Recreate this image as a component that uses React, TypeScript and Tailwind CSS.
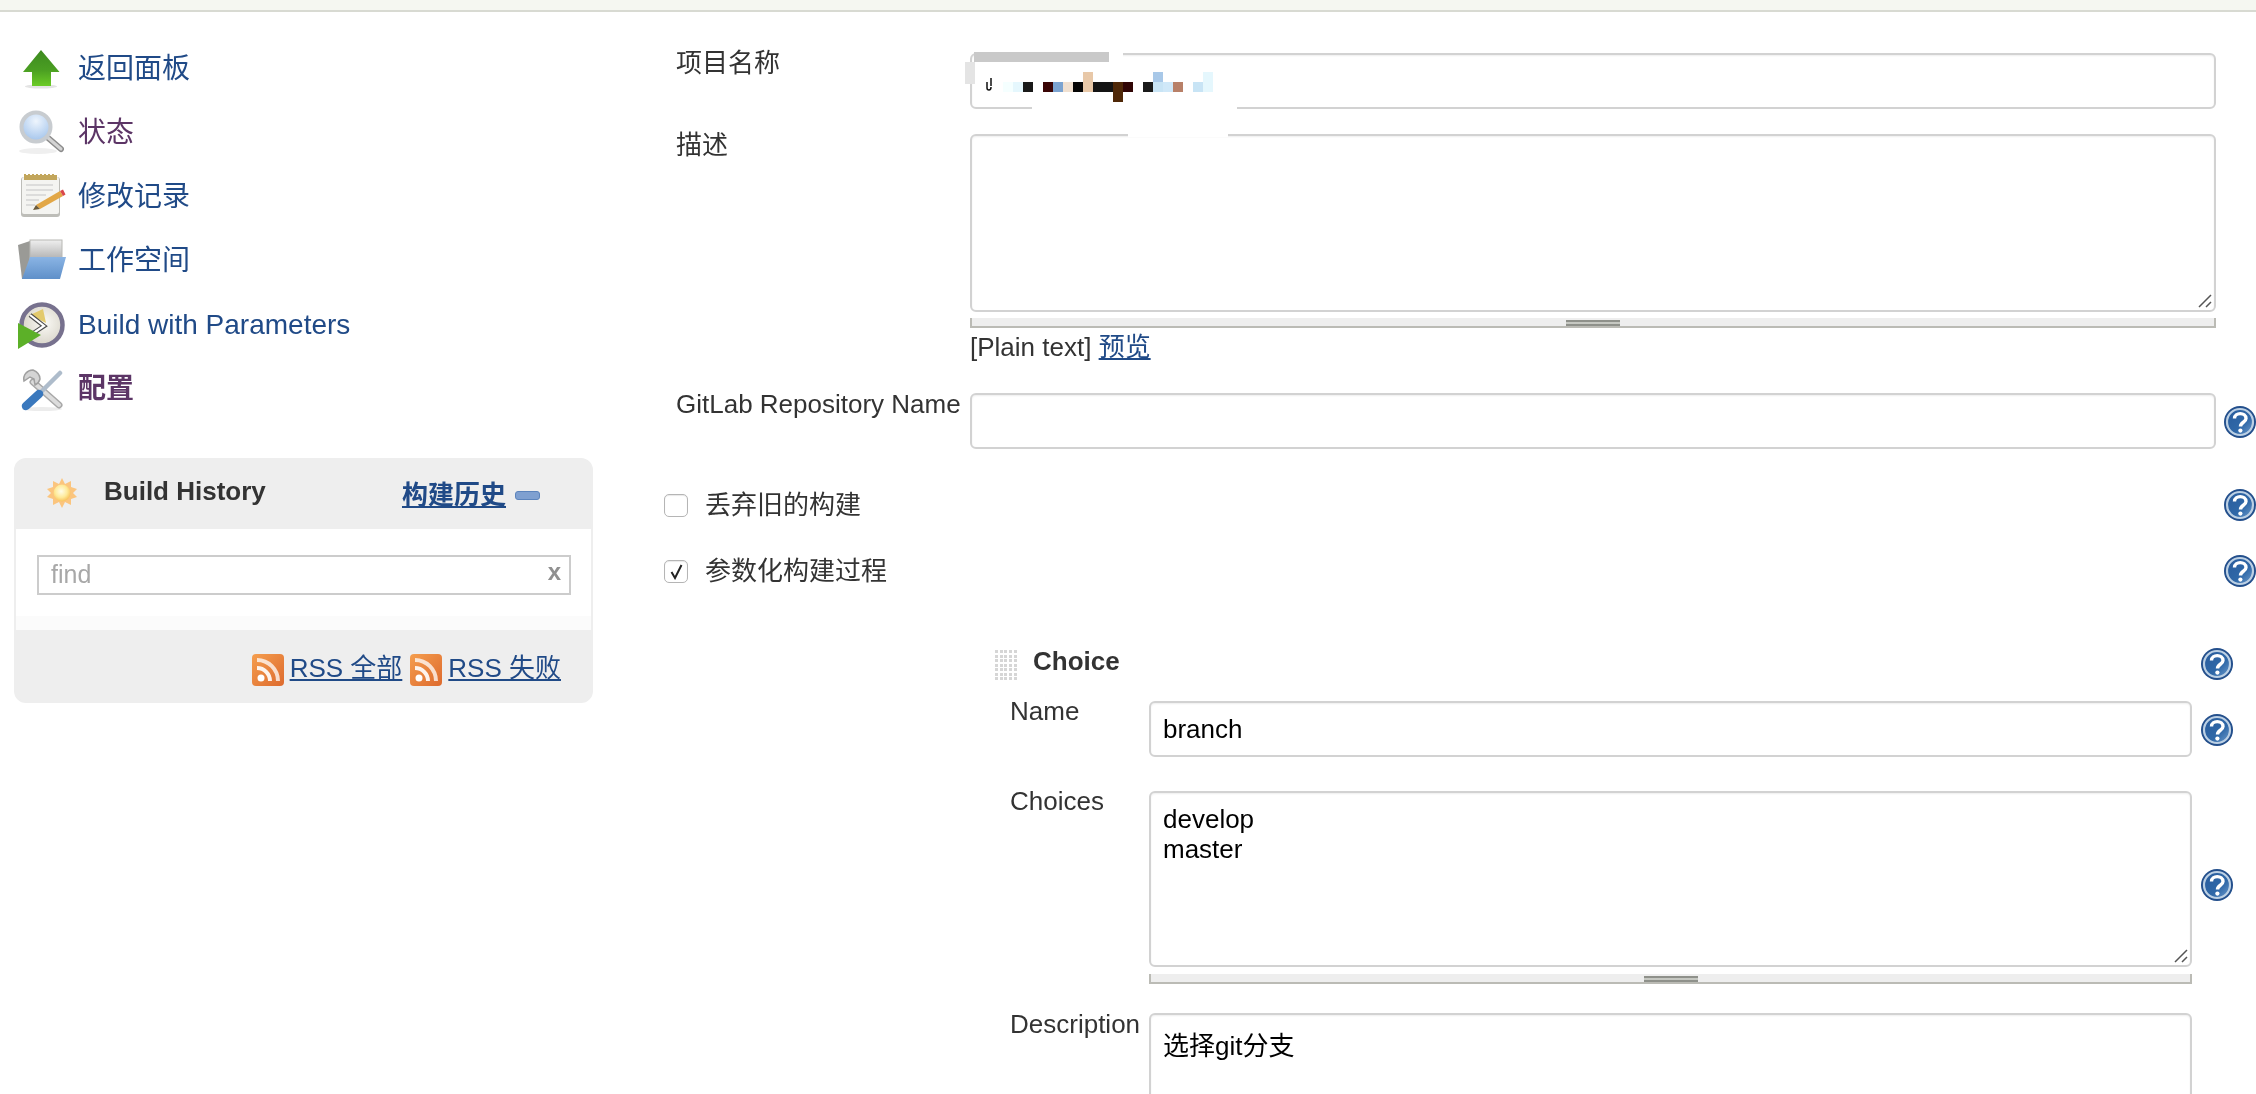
import { useId } from 'react';
import type { ReactNode } from 'react';

const sans = "font-['Liberation_Sans','Noto_Sans_CJK_SC',sans-serif]";

// mosaic that hides the project name: [x, y, w, h, colour]
const blocks: [number, number, number, number, string][] = [
  [1003, 82, 10, 10, '#f5ffff'],
  [1013, 82, 10, 10, '#e5f7fd'],
  [1023, 82, 10, 10, '#1a1a1a'],
  [1043, 82, 10, 10, '#3a0505'],
  [1053, 82, 10, 10, '#7ba3d0'],
  [1063, 82, 10, 10, '#f0e0d0'],
  [1073, 82, 10, 10, '#050505'],
  [1083, 72, 10, 20, '#e8c8a8'],
  [1093, 82, 20, 10, '#141414'],
  [1113, 82, 10, 20, '#4f2808'],
  [1123, 82, 10, 10, '#300505'],
  [1143, 82, 10, 10, '#1a1a1a'],
  [1153, 72, 10, 10, '#a8c8e8'],
  [1153, 82, 10, 10, '#c8e4f5'],
  [1163, 82, 10, 10, '#d0e8f8'],
  [1173, 82, 10, 10, '#b88068'],
  [1193, 82, 10, 10, '#c8e4f5'],
  [1203, 72, 10, 20, '#e5f7fd'],
];

function ArrowIcon() {
  const id = useId();
  return (
    <svg width="48" height="48" viewBox="0 0 48 48">
      <defs>
        <linearGradient id={id} x1="0" y1="0" x2="0" y2="1">
          <stop offset="0" stopColor="#3d8a20" />
          <stop offset="0.55" stopColor="#4a9e22" />
          <stop offset="1" stopColor="#6ccc26" />
        </linearGradient>
      </defs>
      <ellipse cx="23" cy="42.5" rx="16" ry="2" fill="#e4e4e4" />
      <path d="M23 6 L41.5 28 H33 V42 H14 V28 H5 Z" fill={`url(#${id})`} />
    </svg>
  );
}

function SearchIcon() {
  const id = useId();
  return (
    <svg width="48" height="48" viewBox="0 0 48 48">
      <defs>
        <radialGradient id={id} cx="0.5" cy="0.3" r="0.75">
          <stop offset="0" stopColor="#eef5fd" />
          <stop offset="1" stopColor="#9dc0ea" />
        </radialGradient>
      </defs>
      <ellipse cx="20" cy="43" rx="19" ry="3" fill="#efefef" />
      <path d="M29 29 L43 41" stroke="#8c8c8c" strokeWidth="6" strokeLinecap="round" />
      <path d="M29 29 L43 41" stroke="#d4d4d4" strokeWidth="3" strokeLinecap="round" />
      <circle cx="18" cy="19" r="14.5" fill={`url(#${id})`} stroke="#c8ccd0" strokeWidth="4" />
    </svg>
  );
}

function NotepadIcon() {
  return (
    <svg width="48" height="48" viewBox="0 0 48 48">
      <rect x="3" y="5" width="39" height="40" rx="3" fill="#bdbdb8" />
      <rect x="4" y="5" width="37" height="37" rx="2" fill="#f4f4f1" />
      <rect x="6" y="3" width="33" height="5" fill="#c2a65c" />
      <path d="M7 3v-1M11 3v-1M15 3v-1M19 3v-1M23 3v-1M27 3v-1M31 3v-1M35 3v-1" stroke="#c2a65c" strokeWidth="2" />
      <path d="M8 13h27M8 18h27M8 23h20M8 28h13M8 33h9" stroke="#d4d4d4" strokeWidth="1.6" />
      <path d="M18 33 L42 19 L45 24 L22 37 Z" fill="#e2a746" />
      <path d="M42 19 L45 17.5 L47.5 22.5 L45 24 Z" fill="#d9474a" />
      <path d="M18 33 L22 37 L15 38 Z" fill="#6b5a3a" />
    </svg>
  );
}

function FolderIcon() {
  const blue = useId();
  const paper = useId();
  return (
    <svg width="50" height="44" viewBox="0 0 50 44">
      <defs>
        <linearGradient id={blue} x1="0" y1="0" x2="0" y2="1">
          <stop offset="0" stopColor="#8ab4e4" />
          <stop offset="1" stopColor="#5f90c9" />
        </linearGradient>
        <linearGradient id={paper} x1="0" y1="0" x2="0" y2="1">
          <stop offset="0" stopColor="#efefef" />
          <stop offset="1" stopColor="#a8a8a8" />
        </linearGradient>
      </defs>
      <path d="M0 7 L12 3 V30 L6 41 H4 Z" fill="#9a9a96" />
      <rect x="12" y="2" width="32" height="22" fill={`url(#${paper})`} stroke="#b8b8b4" />
      <path d="M12 19 H48 L42 41 H4 Z" fill={`url(#${blue})`} />
    </svg>
  );
}

function ClockPlayIcon() {
  const face = useId();
  return (
    <svg width="48" height="50" viewBox="0 0 48 50">
      <defs>
        <radialGradient id={face} cx="0.55" cy="0.45" r="0.6">
          <stop offset="0" stopColor="#fbfaf6" />
          <stop offset="1" stopColor="#d6d2c6" />
        </radialGradient>
      </defs>
      <circle cx="24" cy="26" r="20.5" fill={`url(#${face})`} stroke="#77718e" strokeWidth="4.5" />
      <path d="M12 16 L25 10 L28 24 Z" fill="#e3ca6c" />
      <path d="M12 16 L26 27 L14 35" fill="none" stroke="#4c4c4c" strokeWidth="4.5" />
      <path d="M12 16 L26 27 L14 35" fill="none" stroke="#fff" strokeWidth="2.2" />
      <path d="M0 24 L23 36 L0 50 Z" fill="#5cb028" />
    </svg>
  );
}

function ToolsIcon() {
  return (
    <svg width="48" height="48" viewBox="0 0 48 48">
      <ellipse cx="24" cy="45" rx="20" ry="2" fill="#ececec" />
      <path d="M15 18 L41 41" stroke="#a8a8a8" strokeWidth="7" strokeLinecap="round" />
      <path d="M15 18 L41 41" stroke="#dcdcdc" strokeWidth="4" strokeLinecap="round" />
      <path d="M15 6 A9 9 0 0 0 6 17 L12 13 L16 15 L17 21 A9 9 0 0 0 22 15 Q22 9 15 6 Z" fill="#d4d4d4" stroke="#a0a0a0" strokeWidth="1.5" />
      <path d="M42 9 L24 27" stroke="#aebccb" strokeWidth="4.5" strokeLinecap="round" />
      <path d="M21 30 L8 42" stroke="#3a78bd" strokeWidth="8.5" strokeLinecap="round" />
    </svg>
  );
}

function SunIcon() {
  const id = useId();
  return (
    <svg width="30" height="30" viewBox="0 0 30 30">
      <defs>
        <radialGradient id={id} cx="0.45" cy="0.4" r="0.6">
          <stop offset="0" stopColor="#fffde8" />
          <stop offset="0.6" stopColor="#feea9a" />
          <stop offset="1" stopColor="#f8c25c" />
        </radialGradient>
      </defs>
      <path
        d="M15 0 L18 6 L24 3 L24 9 L30 11 L26 15 L30 19 L24 21 L24 27 L18 24 L15 30 L12 24 L6 27 L6 21 L0 19 L4 15 L0 11 L6 9 L6 3 L12 6 Z"
        fill="#fbc57e"
      />
      <circle cx="15" cy="15" r="8.5" fill={`url(#${id})`} />
    </svg>
  );
}

function RssIcon() {
  const id = useId();
  return (
    <svg width="32" height="32" viewBox="0 0 32 32">
      <defs>
        <linearGradient id={id} x1="0" y1="0" x2="1" y2="1">
          <stop offset="0" stopColor="#f59e4e" />
          <stop offset="1" stopColor="#dd6a2e" />
        </linearGradient>
      </defs>
      <rect width="32" height="32" rx="4" fill={`url(#${id})`} />
      <circle cx="9" cy="24" r="3.5" fill="#fff" />
      <path d="M5 14 A13 13 0 0 1 18 27" fill="none" stroke="#fff" strokeWidth="4" opacity="0.9" />
      <path d="M5 6 A21 21 0 0 1 26 27" fill="none" stroke="#fff" strokeWidth="4" opacity="0.75" />
    </svg>
  );
}

function HelpIcon() {
  const id = useId();
  return (
    <svg width="32" height="32" viewBox="0 0 32 32" className="shrink-0">
      <defs>
        <linearGradient id={id} x1="0" y1="0" x2="1" y2="1">
          <stop offset="0" stopColor="#2a5c9c" />
          <stop offset="0.6" stopColor="#2f68a8" />
          <stop offset="1" stopColor="#6f9ccc" />
        </linearGradient>
      </defs>
      <circle cx="16" cy="16" r="16" fill="#234f8c" />
      <circle cx="16" cy="16" r="13" fill={`url(#${id})`} stroke="#bcd0e4" strokeWidth="2.2" />
      <path
        d="M10.5 12.5 C10.5 6 22 6 22 12.5 C22 16.5 16.5 16 16.5 20.5"
        fill="none"
        stroke="#fff"
        strokeWidth="3.4"
      />
      <circle cx="16.4" cy="24.6" r="2.1" fill="#fff" />
    </svg>
  );
}

function Grippie() {
  return (
    <div className="h-[10px] border-l-2 border-r-2 border-b-2 border-[#bbbbb5] bg-[#eeeeee] flex justify-center items-end">
      <div className="w-[54px] h-[6px] bg-[#c6c8c2] border-t-2 border-b-2 border-[#8f918b]" />
    </div>
  );
}

function ResizeHandle() {
  return (
    <svg width="16" height="16" viewBox="0 0 16 16" className="absolute right-[1px] bottom-[1px]">
      <path d="M2 14 L14 2 M9 14 L14 9" stroke="#555" strokeWidth="1.5" />
    </svg>
  );
}

const box = 'border-2 border-[#d2d2d2] rounded-[6px] bg-white shadow-[inset_0_1px_2px_#eeeeee]';
const link = 'text-[#204a87]';
const visited = 'text-[#5c3566]';
const label = 'text-[26px] text-[#333333] leading-[20px]';

function NavItem({ icon, text, className }: { icon: ReactNode; text: string; className: string }) {
  return (
    <div className="h-[64px] flex items-center pl-[18px]">
      <div className="w-[60px] flex items-center blur-[0.5px]">{icon}</div>
      <span className={`text-[28px] mt-[1px] ${className}`}>{text}</span>
    </div>
  );
}

function Sidebar() {
  return (
    <div className="w-[664px] shrink-0 pt-[24px]">
      <NavItem icon={<ArrowIcon />} text="返回面板" className={link} />
      <NavItem icon={<SearchIcon />} text="状态" className={visited} />
      <NavItem icon={<NotepadIcon />} text="修改记录" className={link} />
      <NavItem icon={<FolderIcon />} text="工作空间" className={link} />
      <NavItem icon={<ClockPlayIcon />} text="Build with Parameters" className={link} />
      <NavItem icon={<ToolsIcon />} text="配置" className={`${visited} font-bold`} />

      <div className="mt-[38px] ml-[14px] w-[579px] h-[245px] rounded-[12px] border-2 border-[#eeeeee] bg-[#eeeeee] flex flex-col overflow-hidden">
        <div className="h-[69px] shrink-0 flex items-center pl-[31px] pr-[51px]">
          <div className="-mt-[3px]">
            <SunIcon />
          </div>
          <span className="ml-[27px] -mt-[6px] text-[26px] font-bold text-[#333333]">Build History</span>
          <a className={`ml-auto mt-[2px] text-[26px] font-bold underline ${link}`}>构建历史</a>
          <span className="ml-[9px] mt-[2px] w-[25px] h-[9px] rounded-[3px] bg-[#7fa0d0] border border-[#5c84bc]" />
        </div>
        <div className="h-[101px] shrink-0 bg-white border-b-[14px] border-[#fbfbfb] pt-[26px] px-[21px]">
          <div className="h-[40px] w-[534px] border-2 border-[#cccccc] bg-white flex items-center justify-between pl-[12px] pr-[8px]">
            <span className="text-[25px] text-[#a8a8a8]">find</span>
            <span className="text-[24px] font-bold text-[#909090] -mt-[6px]">x</span>
          </div>
        </div>
        <div className="flex-1 flex items-start justify-end pt-[22px] pr-[30px] text-[26px]">
          <div className="flex items-center">
            <RssIcon />
            <a className={`ml-[6px] -mt-[3px] underline ${link}`}>RSS 全部</a>
          </div>
          <div className="flex items-center ml-[8px]">
            <RssIcon />
            <a className={`ml-[6px] -mt-[3px] underline ${link}`}>RSS 失败</a>
          </div>
        </div>
      </div>
    </div>
  );
}

function ProjectFields() {
  return (
    <>
      <div className="flex pl-[12px]">
        <div className={`w-[294px] shrink-0 ${label}`}>项目名称</div>
        <div className={`${box} w-[1246px] h-[56px]`} />
      </div>
      <div className="flex pl-[12px] mt-[25px]">
        <div className={`w-[294px] shrink-0 mt-[1px] ${label}`}>描述</div>
        <div className="w-[1246px]">
          <div className={`${box} h-[178px] relative`}>
            <ResizeHandle />
          </div>
          <div className="mt-[6px]">
            <Grippie />
          </div>
          <div className="mt-[1px] text-[26px] text-[#333333] leading-[36px]">
            [Plain text] <a className={`underline ${link}`}>预览</a>
          </div>
        </div>
      </div>
      <div className="flex pl-[12px] mt-[28px]">
        <div className={`w-[294px] shrink-0 mt-[1px] whitespace-nowrap ${label}`}>GitLab Repository Name</div>
        <div className={`${box} w-[1246px] h-[56px]`} />
        <div className="ml-[8px] mt-[13px]">
          <HelpIcon />
        </div>
      </div>
    </>
  );
}

function CheckRow({ text, checked, className }: { text: string; checked?: boolean; className: string }) {
  return (
    <div className={`flex items-center h-[32px] ${className}`}>
      <div className="w-[24px] h-[23px] rounded-[5px] border border-[#b5b5b5] bg-white flex items-center justify-center shadow-[inset_0_1px_1px_#e8e8e8]">
        {checked && (
          <svg width="15" height="17" viewBox="0 0 15 17">
            <path d="M2.5 9 L6 15 L12.5 2" fill="none" stroke="#222" strokeWidth="2" />
          </svg>
        )}
      </div>
      <span className="ml-[17px] text-[26px] text-[#333333]">{text}</span>
      <div className="ml-auto">
        <HelpIcon />
      </div>
    </div>
  );
}

function ChoiceBlock() {
  return (
    <div className="ml-[331px] mt-[61px]">
      <div className="flex items-center h-[32px] pr-[23px]">
        <div className="w-[22px] h-[28px] grid grid-cols-5 gap-[1.5px]">
          {Array.from({ length: 35 }).map((_, i) => (
            <span key={i} className="w-[3px] h-[3px] bg-[#d6d6d6]" />
          ))}
        </div>
        <span className="ml-[16px] -mt-[6px] text-[26px] font-bold text-[#333333]">Choice</span>
        <div className="ml-auto">
          <HelpIcon />
        </div>
      </div>
      <div className="flex mt-[21px] pl-[15px]">
        <div className={`w-[139px] shrink-0 ${label}`}>Name</div>
        <div className={`${box} w-[1043px] h-[56px] flex items-center pl-[12px] text-[26px] text-black`}>branch</div>
        <div className="ml-[9px] mt-[13px]">
          <HelpIcon />
        </div>
      </div>
      <div className="flex mt-[34px] pl-[15px]">
        <div className={`w-[139px] shrink-0 ${label}`}>Choices</div>
        <div className="w-[1043px]">
          <div className={`${box} h-[176px] relative pl-[12px] pt-[11px] text-[26px] leading-[30px] text-black`}>
            develop
            <br />
            master
            <ResizeHandle />
          </div>
          <div className="mt-[7px]">
            <Grippie />
          </div>
        </div>
        <div className="ml-[9px] mt-[78px]">
          <HelpIcon />
        </div>
      </div>
      <div className="flex mt-[29px] pl-[15px]">
        <div className={`w-[139px] shrink-0 mt-[1px] ${label}`}>Description</div>
        <div className={`${box} w-[1043px] h-[178px] pl-[12px] pt-[16px] text-[26px] leading-[30px] text-black`}>选择git分支</div>
      </div>
    </div>
  );
}

export default function App() {
  return (
    <div className={`w-[2256px] h-[1094px] overflow-hidden bg-white relative blur-[0.35px] ${sans}`}>
      <div className="h-[12px] bg-[#f5f7f1] border-b-2 border-[#d8dad2]" />
      <div className="flex">
        <Sidebar />
        <div className="flex-1 pt-[41px]">
          <ProjectFields />
          <CheckRow text="丢弃旧的构建" className="mt-[40px]" />
          <CheckRow text="参数化构建过程" checked className="mt-[34px]" />
          <ChoiceBlock />
        </div>
      </div>
      {/* redacted project name */}
      <svg width="2256" height="160" className="absolute left-0 top-0 pointer-events-none">
        <rect x="974" y="52" width="135" height="10" fill="#c9c9c9" />
        <rect x="1109" y="52" width="14" height="8" fill="#fff" />
        <rect x="965" y="62" width="10" height="22" fill="#e4e4e4" />
        <rect x="1032" y="105" width="205" height="7" fill="#fff" />
        <rect x="1128" y="130" width="100" height="7" fill="#fff" />
        <path d="M987 82 v6 q0 2 2 2 t2 -3 M991 78 v8" fill="none" stroke="#111" strokeWidth="1.5" />
        {blocks.map(([x, y, w, h, c], i) => (
          <rect key={i} x={x} y={y} width={w} height={h} fill={c} />
        ))}
      </svg>
    </div>
  );
}
